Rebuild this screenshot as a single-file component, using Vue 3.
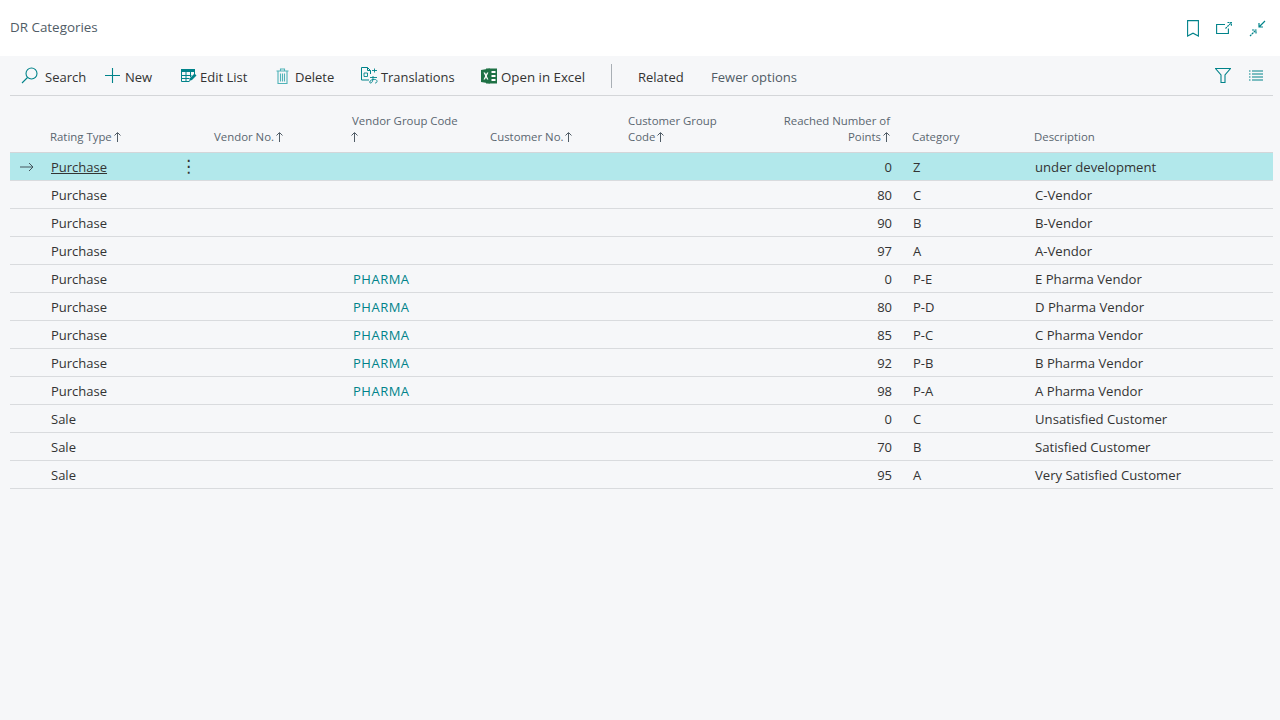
<template>
  <div class="page">
    <header class="title-bar">
      <span class="title">DR Categories</span>
      <div class="title-actions">
        <svg width="12" height="17" viewBox="0 0 12 17" fill="none" stroke="#00838a" stroke-width="1.1">
          <path d="M.6.600h10.800v15.400L6 13.200.6 16z" />
        </svg>
        <svg width="16" height="14" viewBox="0 0 16 14" fill="none" stroke="#00838a" stroke-width="1.1">
          <path d="M9 3.500H.6v9h11.800V7.500" />
          <path d="M9.500 7.500L15 2M11.500 1.500h3.900V5" stroke-dasharray="2 .6" />
        </svg>
        <svg width="17" height="17" viewBox="0 0 17 17" fill="none" stroke="#00838a" stroke-width="1.2">
          <path d="M16 1l-6 6M10 3v4h4" />
          <path d="M1 16l6-6M3 10h4v4" stroke-dasharray="2 .6" />
        </svg>
      </div>
    </header>

    <div class="content">
      <div class="toolbar">
        <button class="tool search">
          <svg width="17" height="17" viewBox="0 0 17 17" fill="none" stroke="#00838a" stroke-width="1.1">
            <circle cx="10.500" cy="6.500" r="5.500" />
            <path d="M6.500 10.500L1 16" />
          </svg>
          Search
        </button>
        <button class="tool new">
          <svg width="15" height="15" viewBox="0 0 15 15" stroke="#00838a" stroke-width="1.1">
            <path d="M7.500 0v15M0 7.500h15" />
          </svg>
          New
        </button>
        <button class="tool edit">
          <svg width="16" height="14" viewBox="0 0 16 14">
            <path d="M0 0h14v3H0z" fill="#00838a" />
            <path d="M.5 3v9.500h8M13.500 3v3M.5 6.500h10M.5 9.500h8M5 3v9.500M9.500 3v5" fill="none" stroke="#00838a" />
            <path d="M8 12l1-3 4.500-4.500 2 2L11 11z" fill="#00838a" />
          </svg>
          Edit List
        </button>
        <button class="tool delete">
          <svg width="13" height="16" viewBox="0 0 13 16" fill="none" stroke="#4fb3b8" stroke-width="1.1">
            <path d="M.5 3h12M4.500 3V1h4v2M2 3v12.500h9V3M4.500 5.500v8M6.500 5.500v8M8.500 5.500v8" />
          </svg>
          Delete
        </button>
        <button class="tool translations">
          <svg width="17" height="17" viewBox="0 0 17 17" fill="none" stroke="#00838a">
            <path d="M8 13H.5V.5h6l3 3V7M6.500.5v3h3" />
            <path d="M3 6h3.500v3.500H3zM11 3.500h5M13.500 1.500v4" stroke-width=".9" />
            <path d="M9 10.500h7M12 9v2c0 3-1 5-2.500 5S8.500 13 12 12.500s4 1 4 2-1 1.500-2 1.500" stroke-width=".9" />
          </svg>
          Translations
        </button>
        <button class="tool excel">
          <svg width="16" height="16" viewBox="0 0 16 16">
            <path d="M5 .5h11v15H5z" fill="#1e7145" />
            <path d="M0 2l9-1.500v15L0 14z" fill="#1e7145" />
            <path d="M10.500 3h4v2h-4zM10.500 7h4v2h-4zM10.500 11h4v2h-4z" fill="#fff" />
            <path d="M2.500 4.500h1.600L5 6.600l1-2.100h1.400L5.800 8l1.600 3.500H6L5 9.300l-1 2.200H2.500L4.200 8z" fill="#fff" />
          </svg>
          Open in Excel
        </button>
        <span class="divider"></span>
        <button class="tool related">Related</button>
        <button class="tool fewer">Fewer options</button>
        <div class="toolbar-end">
          <svg width="16" height="15" viewBox="0 0 16 15" fill="none" stroke="#00838a" stroke-width="1.1">
            <path d="M.5.500h15L10 7v7.500H6V7z" />
          </svg>
          <svg width="14" height="11" viewBox="0 0 14 11" stroke="#00838a" stroke-width="1.100">
            <path d="M0 1h1.500M3 1h11M0 4h1.500M3 4h11M0 7h1.500M3 7h11M0 10h1.500M3 10h11" />
          </svg>
        </div>
      </div>

      <div class="list">
        <div class="list-head">
          <span></span>
          <span v-for="col in columns" :key="col.label" :class="['th', { num: col.num }]">
            {{ col.label }}<br v-if="col.rest !== undefined" />{{ col.rest }}
            <svg v-if="col.sorted" class="sort" width="7" height="10" viewBox="0 0 7 10" fill="none" stroke="#505c66">
              <path d="M3.500 10V1M.5 3.500l3-3 3 3" />
            </svg>
          </span>
        </div>
        <div v-for="(row, i) in rows" :key="i" :class="['list-row', { selected: i === 0 }]">
          <span class="cell marker">
            <svg v-if="i === 0" width="14" height="10" viewBox="0 0 14 10" fill="none" stroke="#44545c">
              <path d="M0 5h13M9 1l4 4-4 4" />
            </svg>
          </span>
          <span class="cell rating">
            <span :class="{ current: i === 0 }">{{ row.type }}</span>
            <b v-if="i === 0" class="dots">⋮</b>
          </span>
          <span class="cell"></span>
          <span class="cell link">{{ row.group }}</span>
          <span class="cell"></span>
          <span class="cell"></span>
          <span class="cell points">{{ row.points }}</span>
          <span class="cell">{{ row.category }}</span>
          <span class="cell description">{{ row.description }}</span>
        </div>
      </div>
    </div>
  </div>
</template>

<script setup>
const columns = [
  { label: 'Rating Type', sorted: true },
  { label: 'Vendor No.', sorted: true },
  { label: 'Vendor Group Code', rest: '', sorted: true },
  { label: 'Customer No.', sorted: true },
  { label: 'Customer Group', rest: 'Code', sorted: true },
  { label: 'Reached Number of', rest: 'Points', sorted: true, num: true },
  { label: 'Category' },
  { label: 'Description' },
]

const rows = [
  { type: 'Purchase', group: '', points: 0, category: 'Z', description: 'under development' },
  { type: 'Purchase', group: '', points: 80, category: 'C', description: 'C-Vendor' },
  { type: 'Purchase', group: '', points: 90, category: 'B', description: 'B-Vendor' },
  { type: 'Purchase', group: '', points: 97, category: 'A', description: 'A-Vendor' },
  { type: 'Purchase', group: 'PHARMA', points: 0, category: 'P-E', description: 'E Pharma Vendor' },
  { type: 'Purchase', group: 'PHARMA', points: 80, category: 'P-D', description: 'D Pharma Vendor' },
  { type: 'Purchase', group: 'PHARMA', points: 85, category: 'P-C', description: 'C Pharma Vendor' },
  { type: 'Purchase', group: 'PHARMA', points: 92, category: 'P-B', description: 'B Pharma Vendor' },
  { type: 'Purchase', group: 'PHARMA', points: 98, category: 'P-A', description: 'A Pharma Vendor' },
  { type: 'Sale', group: '', points: 0, category: 'C', description: 'Unsatisfied Customer' },
  { type: 'Sale', group: '', points: 70, category: 'B', description: 'Satisfied Customer' },
  { type: 'Sale', group: '', points: 95, category: 'A', description: 'Very Satisfied Customer' },
]
</script>

<style>
html, body {
  margin: 0;
  background: #f6f7f9;
}
</style>

<style scoped>
.page {
  width: 1280px;
  height: 720px;
  overflow: hidden;
  background: #f6f7f9;
  color: #333;
  font-family: "Open Sans", "Noto Sans", sans-serif;
  font-size: 13px;
}

.title-bar {
  height: 56px;
  background: #fff;
  display: flex;
  align-items: center;
  justify-content: space-between;
  padding: 0 14px 2px 10px;
  box-sizing: border-box;
}

.title {
  font-size: 13.400px;
  color: #505c66;
}

.title-actions {
  display: flex;
  align-items: center;
  gap: 17px;
  padding-top: 2px;
}

.content {
  margin: 0 7px 0 10px;
}

.toolbar {
  height: 40px;
  box-sizing: border-box;
  border-bottom: 1px solid #d4d6d9;
  display: flex;
  align-items: center;
  padding-left: 11px;
  padding-top: 2px;
}

.tool {
  display: inline-flex;
  align-items: center;
  gap: 6px;
  border: 0;
  padding: 0;
  background: none;
  color: #333;
  font: inherit;
  white-space: nowrap;
}

.tool svg {
  position: relative;
  top: -1px;
}

.search { width: 84px; gap: 7px; }
.new { width: 76px; gap: 5px; }
.edit { width: 95px; gap: 3px; }
.delete { width: 85px; gap: 6px; }
.translations { width: 120px; gap: 3px; font-size: 12.900px; }
.excel { width: 130px; gap: 4px; font-size: 13.300px; }
.divider {
  width: 1px;
  height: 24px;
  background: #a9afb5;
  margin: -2px 26px 0 0;
}
.related { width: 73px; }
.fewer { color: #505c66; font-size: 13.050px; }

.toolbar-end {
  margin-left: auto;
  display: flex;
  align-items: center;
  gap: 18px;
  padding-right: 10px;
  margin-top: -2px;
}

.list-head,
.list-row {
  display: grid;
  grid-template-columns: 40px 164px 138px 138px 138px 138px 146px 122px 1fr;
}

.list-head {
  height: 57px;
  box-sizing: border-box;
  border-bottom: 1px solid #d4d6d9;
  align-items: end;
  padding-bottom: 7px;
}

.th {
  font-size: 11.400px;
  line-height: 16px;
  color: #5a6670;
}

.th.num {
  text-align: right;
  padding-right: 22px;
}

.sort {
  margin-left: -1px;
  vertical-align: -1px;
}

.list-row {
  height: 28px;
  box-sizing: border-box;
  border-bottom: 1px solid #d9dbde;
  align-items: center;
}

.list-row.selected {
  background: #b2e8eb;
}

.cell {
  display: block;
  padding-left: 1px;
  white-space: nowrap;
}

.description {
  font-size: 13.150px;
}

.marker {
  display: flex;
  padding-left: 10px;
}

.rating {
  position: relative;
}

.current {
  text-decoration: underline;
}

.dots {
  position: absolute;
  left: 130px;
  top: -2px;
  font-size: 17px;
  font-weight: 400;
  font-family: "DejaVu Sans", sans-serif;
}

.link {
  color: #00838a;
  letter-spacing: .5px;
}

.points {
  padding-right: 20px;
  text-align: right;
}
</style>
